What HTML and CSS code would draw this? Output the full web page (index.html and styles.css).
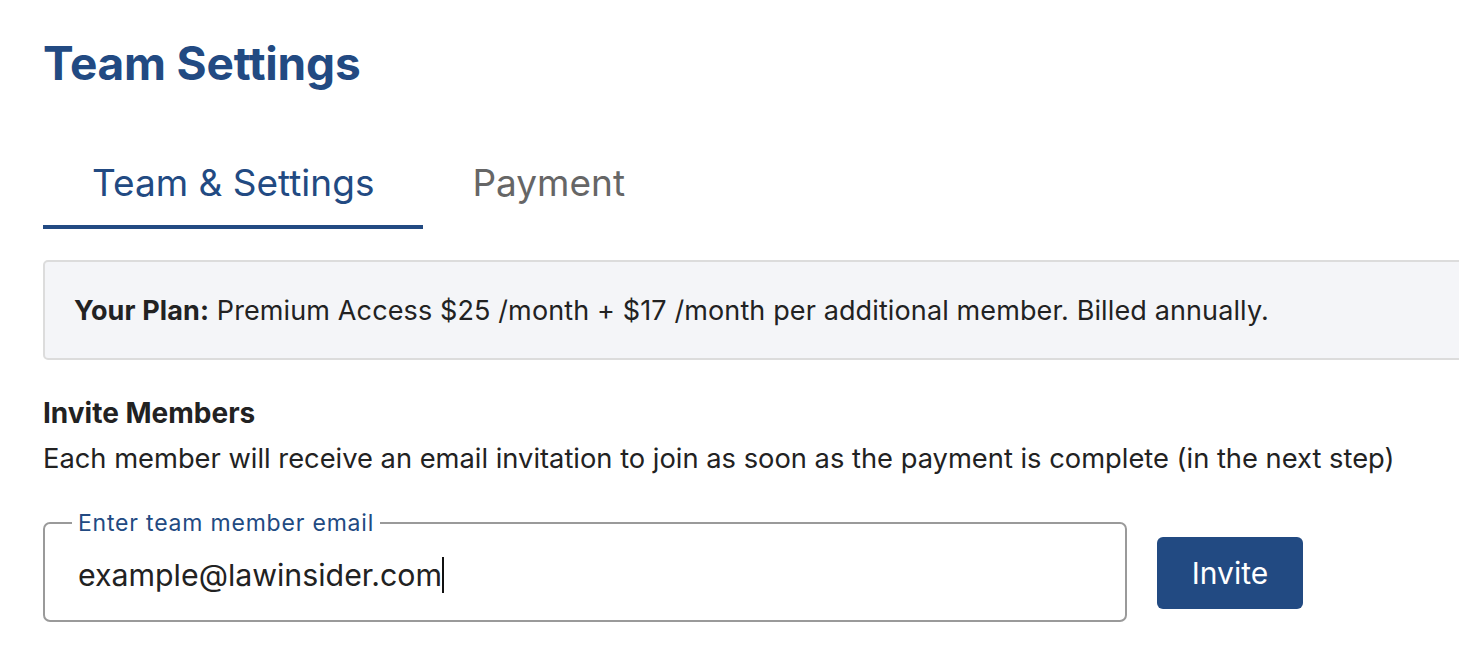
FILE: index.html
```html
<!DOCTYPE html>
<html lang="en">
<head>
<meta charset="utf-8">
<title>Team Settings</title>
<link rel="stylesheet" href="styles.css">
</head>
<body>
<main class="page">
  <h1 class="title">Team Settings</h1>
  <nav class="tabs">
    <div class="tab tab-active">Team &amp; Settings</div>
    <div class="tab">Payment</div>
  </nav>
  <section class="plan">
    <p><strong>Your Plan:</strong> Premium Access $25 /month + $17 /month per additional member. Billed annually.</p>
  </section>
  <section class="invite">
    <h2 class="invite-title">Invite Members</h2>
    <p class="invite-desc">Each member will receive an email invitation to join as soon as the payment is complete (in the next step)</p>
    <div class="invite-row">
      <fieldset class="field">
        <legend>Enter team member email</legend>
        <div class="field-value">example@lawinsider.com<span class="caret"></span></div>
      </fieldset>
      <button class="btn">Invite</button>
    </div>
  </section>
</main>
</body>
</html>
```
FILE: styles.css
```css
html, body {
  margin: 0;
  padding: 0;
  background: #fff;
  overflow: hidden;
}
body {
  font-family: Inter, "Noto Sans", sans-serif;
  color: #222;
}
.page {
  padding: 31px 0 0 43px;
  width: 1480px;
}
.title {
  margin: 0;
  font-size: 46px;
  font-weight: 700;
  color: #224a82;
  line-height: 64px;
  letter-spacing: -0.2px;
}
.tabs {
  display: flex;
  margin-top: 58px;
}
.tab {
  padding: 0 49px 12px;
  font-size: 37px;
  line-height: 60px;
  color: #666;
}
.tab-active {
  color: #224a82;
  border-bottom: 4px solid #224a82;
}
.plan {
  margin-top: 31px;
  background: #f4f5f8;
  border: 2px solid #dcdcdc;
  border-radius: 5px;
  height: 100px;
  display: flex;
  align-items: center;
  padding-left: 29px;
  box-sizing: border-box;
}
.plan p {
  margin: 0;
  font-size: 27px;
  letter-spacing: 0.12px;
  color: #222;
}
.plan strong { font-weight: 700; }
.invite { margin-top: 34px; }
.invite-title {
  margin: 0;
  font-size: 28px;
  font-weight: 700;
  line-height: 38px;
  color: #222;
}
.invite-desc {
  margin: 8px 0 0;
  font-size: 27.3px;
  line-height: 38px;
  color: #222;
}
.invite-row {
  display: flex;
  align-items: flex-end;
  margin-top: 33px;
}
.field {
  margin: 0;
  width: 1084px;
  box-sizing: border-box;
  border: 2px solid #9a9a9a;
  border-radius: 7px;
  padding: 0 32px 0 33px;
  height: 111px;
}
.field legend {
  font-size: 23px;
  letter-spacing: 0.8px;
  color: #224a82;
  padding: 0 6px;
  margin-left: -6px;
  line-height: 24px;
}
.field-value {
  font-size: 30.3px;
  line-height: 40px;
  margin-top: 20px;
  color: #222;
  display: flex;
  align-items: center;
}
.caret {
  display: inline-block;
  width: 2px;
  height: 36px;
  background: #111;
}
.btn {
  margin: 0 0 13px 30px;
  width: 146px;
  height: 72px;
  border: none;
  border-radius: 6px;
  background: #224a82;
  color: #fff;
  font-family: Inter, "Noto Sans", sans-serif;
  font-size: 30px;
}
```
